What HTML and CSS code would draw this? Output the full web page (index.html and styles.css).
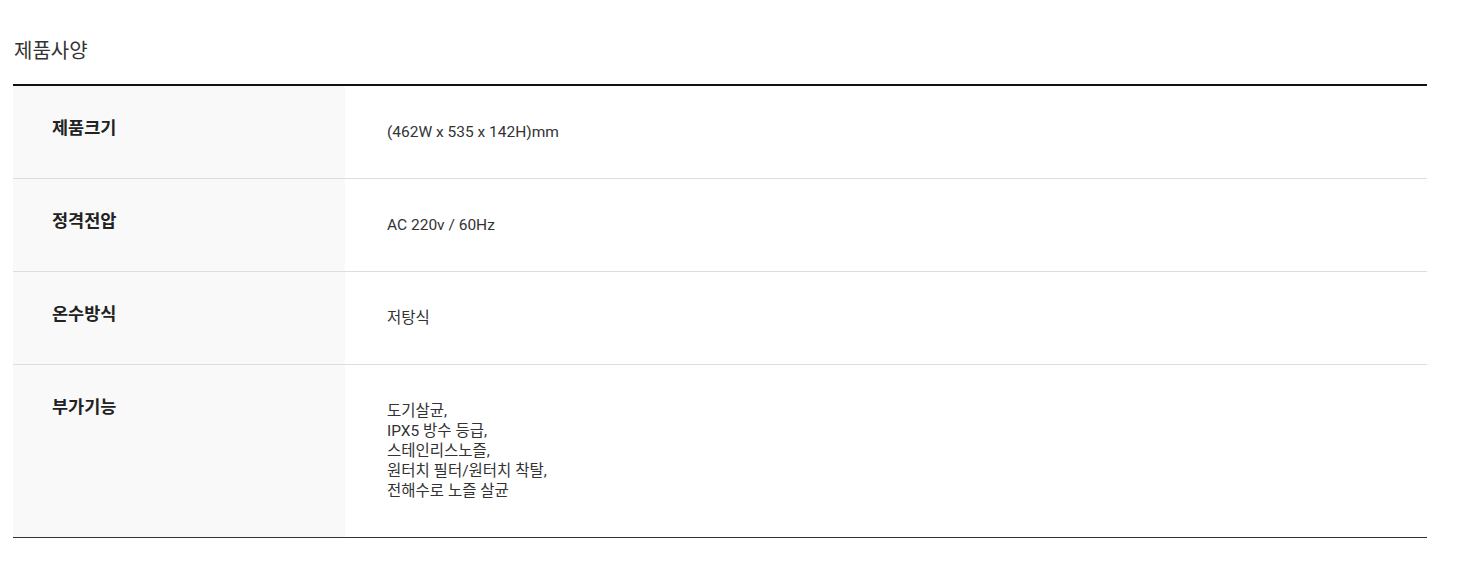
FILE: index.html
```html
<!DOCTYPE html>
<html lang="ko">
<head>
<meta charset="utf-8">
<link rel="stylesheet" href="styles.css">
</head>
<body>
<div class="wrap">
  <h2 class="title">제품사양</h2>
  <table class="spec">
    <tbody>
      <tr>
        <th>제품크기</th>
        <td>(462W x 535 x 142H)mm</td>
      </tr>
      <tr>
        <th>정격전압</th>
        <td>AC 220v / 60Hz</td>
      </tr>
      <tr>
        <th>온수방식</th>
        <td>저탕식</td>
      </tr>
      <tr>
        <th>부가기능</th>
        <td>도기살균,<br>IPX5 방수 등급,<br>스테인리스노즐,<br>원터치 필터/원터치 착탈,<br>전해수로 노즐 살균</td>
      </tr>
    </tbody>
  </table>
</div>
</body>
</html>
```
FILE: styles.css
```css
html, body {
  margin: 0;
  padding: 0;
  background: #fff;
}
body {
  font-family: Roboto, "Noto Sans CJK KR", sans-serif;
  color: #333;
}
.wrap {
  padding: 0 51px 0 13px;
}
.title {
  margin: 0 0 22px;
  padding: 38px 0 0 1px;
  font-family: "Noto Sans CJK KR", sans-serif;
  font-size: 20px;
  font-weight: 400;
  line-height: 24px;
  color: #333;
}
.spec {
  width: 100%;
  border-collapse: collapse;
  border-top: 2px solid #111;
  border-bottom: 1px solid #333;
}
.spec tr + tr {
  border-top: 1px solid #ddd;
}
.spec th {
  width: 332px;
  box-sizing: border-box;
  background: #f9f9f9;
  text-align: left;
  vertical-align: top;
  padding: 29px 0 0 39px;
  font-family: "Noto Sans CJK KR", sans-serif;
  font-size: 17.5px;
  font-weight: 700;
  line-height: 24px;
  color: #222;
}
.spec td {
  vertical-align: top;
  padding: 36px 20px 36px 42px;
  font-size: 15.5px;
  line-height: 20px;
  color: #333;
}
```
